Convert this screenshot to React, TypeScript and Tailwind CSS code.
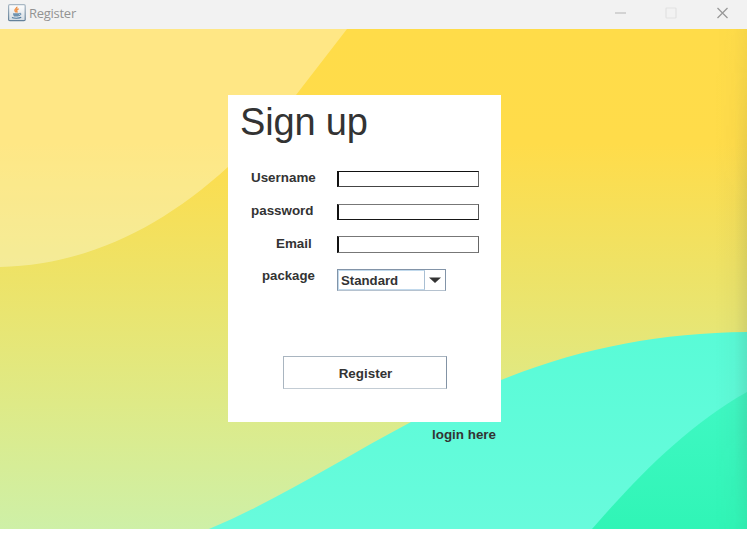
import React from "react";

function JavaIcon() {
  return (
    <svg width="18" height="18" viewBox="0 0 18 18" fill="none">
      <defs>
        <linearGradient id="tile" x1="0" y1="0" x2="0" y2="1">
          <stop offset="0" stopColor="#ffffff" />
          <stop offset="1" stopColor="#d3dce3" />
        </linearGradient>
        <linearGradient id="tileEdge" x1="0" y1="0" x2="0" y2="1">
          <stop offset="0" stopColor="#a9b8c4" />
          <stop offset="1" stopColor="#64819a" />
        </linearGradient>
      </defs>
      <rect x="0.6" y="0.6" width="16.6" height="16" rx="1.2" fill="url(#tile)" stroke="url(#tileEdge)" strokeWidth="1.2" />
      <path d="M8.8 2.8C9.4 4.4 6.2 5.2 7 6.8c.3.7.9 1 1 1.6M10.6 4.8C9 5.5 8.2 6.1 8.8 7.1c.3.5.3.9-.1 1.3" stroke="#f0934a" strokeWidth="1.5" />
      <path d="M5 9.2h6.5c0 2-1 3.4-2 3.4H7c-1.2 0-2-1.400-2-3.400Z" fill="#6f92ae" />
      <path d="M11.4 9.400c2.200-.5 2 1.500-.3 2.200" stroke="#517b9f" strokeWidth="1" />
      <path d="M4 13.500c1.500 1 7.500 1 9.200-.2" stroke="#517b9f" strokeWidth="1.200" />
    </svg>
  );
}

function TitleBar() {
  return (
    <header className="flex h-[29px] w-full shrink-0 items-start bg-[#f2f2f2] pl-2">
      <div className="pt-1">
        <JavaIcon />
      </div>
      <span className="ml-[3px] mt-[5px] font-['Open_Sans','Noto_Sans',sans-serif] text-[13px] leading-[17px] tracking-[-0.27px] text-[#929292]">
        Register
      </span>
      <div className="ml-auto flex pr-[18px] pt-[7px]">
        <svg width="114" height="12" viewBox="0 0 114 12" fill="none">
          <path d="M0 6h11" stroke="#cbcbcb" strokeWidth="1.6" />
          <rect x="51" y="1" width="10" height="10" rx="0.8" stroke="#e1e1e1" strokeWidth="1.2" />
          <path d="M102.5 1l10 10M112.5 1l-10 10" stroke="#999999" strokeWidth="1.3" />
        </svg>
      </div>
    </header>
  );
}

function Backdrop() {
  return (
    <svg className="absolute inset-0" width="747" height="500" viewBox="0 29 747 500">
      <defs>
        <linearGradient id="sky" gradientUnits="userSpaceOnUse" x1="0" y1="29" x2="0" y2="529">
          <stop offset="0" stopColor="#ffdc49" />
          <stop offset="0.23" stopColor="#ffdc4a" />
          <stop offset="0.5" stopColor="#ede368" />
          <stop offset="0.75" stopColor="#deea87" />
          <stop offset="1" stopColor="#cef0a7" />
        </linearGradient>
        <linearGradient id="teal" x1="0" y1="0" x2="0" y2="1">
          <stop offset="0" stopColor="#59fbd7" />
          <stop offset="1" stopColor="#68fbdc" />
        </linearGradient>
        <linearGradient id="green" x1="0" y1="0" x2="0" y2="1">
          <stop offset="0" stopColor="#40f8c4" />
          <stop offset="1" stopColor="#30f5b6" />
        </linearGradient>
        <linearGradient id="edge" x1="0" y1="0" x2="1" y2="0">
          <stop offset="0" stopColor="#405040" stopOpacity="0" />
          <stop offset="0.6" stopColor="#405040" stopOpacity="0.03" />
          <stop offset="1" stopColor="#405040" stopOpacity="0.13" />
        </linearGradient>
        <linearGradient id="edgeFade" x1="0" y1="0" x2="0" y2="1">
          <stop offset="0" stopColor="#555555" />
          <stop offset="0.35" stopColor="#ffffff" />
          <stop offset="0.8" stopColor="#ffffff" />
          <stop offset="1" stopColor="#777777" />
        </linearGradient>
        <mask id="edgeMask">
          <rect x="715" y="29" width="32" height="500" fill="url(#edgeFade)" />
        </mask>
      </defs>
      <rect y="29" width="747" height="500" fill="url(#sky)" />
      <path d="M0 29H347L296 95C274 123 253 146 228 167C160 229 85 265 0 267Z" fill="#ffffff" fillOpacity="0.33" />
      <path d="M209 529C278 500 343 458 411 422C440 406 470 392 501 380C580 348 660 333 747 332V529Z" fill="url(#teal)" />
      <path d="M592 529C638 476 688 425 747 392V529Z" fill="url(#green)" />
      <rect x="715" y="29" width="32" height="500" fill="url(#edge)" mask="url(#edgeMask)" />
    </svg>
  );
}

function TextRow({ label, row, pad, border }: { label: string; row: string; pad: string; border: string }) {
  return (
    <div className={"flex items-start " + row}>
      <label className={"w-[109px] text-[13.4px] font-bold leading-[16px] " + pad}>{label}</label>
      <input aria-label={label} className={"mt-[3px] w-[142px] border border-l-2 bg-white outline-none " + border} />
    </div>
  );
}

export default function App() {
  return (
    <div className="h-[534px] w-[750px] overflow-hidden bg-white font-['Liberation_Sans',Arial,sans-serif] text-[#333333]">
      <div className="flex h-[529px] w-[747px] flex-col">
        <TitleBar />
        <main className="relative flex-1">
          <Backdrop />
          <div className="relative ml-[228px] w-[273px] pt-[66px]">
            <section className="flex h-[327px] flex-col bg-white">
              <h1 className="h-[73px] pl-3 pt-[5px] text-[38px] leading-[44px] tracking-[-0.15px]">Sign up</h1>
              <TextRow label="Username" row="h-[33px]" pad="pl-[23px] pt-[2px]" border="h-4 border-t-[#111111] border-l-[#111111] border-r-[#666666] border-b-[#444444]" />
              <TextRow label="password" row="h-8" pad="pl-[23px] pt-[2px]" border="h-4 border-t-[#777777] border-l-[#111111] border-r-[#555555] border-b-[#161616]" />
              <TextRow label="Email" row="h-[34px]" pad="pl-[48px] pt-[3px]" border="h-[17px] border-t-[#777777] border-l-[#111111] border-r-[#666666] border-b-[#777777]" />
              <div className="flex items-start">
                <label className="w-[109px] pl-[34px] pt-px text-[13.2px] font-bold leading-[16px]">package</label>
                <div className="mt-[2px] flex h-[22px] w-[109px] border border-[#8294a8] border-b-[#b5c2cf]">
                  <div className="flex w-[87px] items-center border border-[#c1d9ec] border-r-[#a9bfd3] pl-[2px] pt-px text-[13.2px] font-bold leading-[16px]">
                    Standard
                  </div>
                  <div className="flex flex-1 items-center justify-center">
                    <svg width="12" height="6" viewBox="0 0 12 6">
                      <path d="M0 0.5H12L6 6Z" fill="#333333" />
                    </svg>
                  </div>
                </div>
              </div>
              <button className="ml-[55px] mt-[65px] h-[33px] w-[164px] border border-[#a9b5c0] border-b-[#c3ccd4] border-r-[#8393a5] bg-white pl-px pt-[3px] text-[13.4px] font-bold leading-[16px]">
                Register
              </button>
            </section>
            <a className="mt-[5px] block pr-[5px] text-right text-[13.4px] font-bold leading-[16px]">login here</a>
          </div>
        </main>
      </div>
    </div>
  );
}
